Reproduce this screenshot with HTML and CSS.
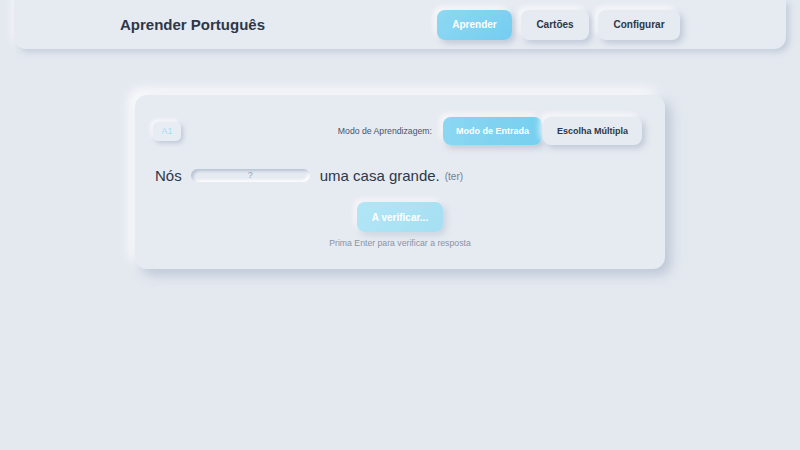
FILE: index.html
```html
<!DOCTYPE html>
<html lang="pt">
<head>
<meta charset="utf-8">
<title>Aprender Português</title>
<link rel="stylesheet" href="styles.css">
</head>
<body>
<header class="header">
  <div class="header-inner">
    <h1 class="title">Aprender Português</h1>
    <nav class="nav">
      <button class="nav-btn active">Aprender</button>
      <button class="nav-btn">Cartões</button>
      <button class="nav-btn">Configurar</button>
    </nav>
  </div>
</header>
<main class="main">
  <section class="card">
    <div class="top-row">
      <span class="badge">A1</span>
      <div class="mode">
        <span class="mode-label">Modo de Aprendizagem:</span>
        <div class="toggle">
          <button class="toggle-btn active">Modo de Entrada</button>
          <button class="toggle-btn">Escolha Múltipla</button>
        </div>
      </div>
    </div>
    <div class="sentence">
      <span class="word">Nós</span>
      <span class="blank">?</span>
      <span class="word">uma casa grande.</span>
      <span class="hint-verb">(ter)</span>
    </div>
    <div class="actions">
      <button class="check-btn">A verificar...</button>
      <p class="help">Prima Enter para verificar a resposta</p>
    </div>
  </section>
</main>
</body>
</html>
```

FILE: styles.css
```css
* { box-sizing: border-box; }
html, body { margin: 0; padding: 0; }
body {
  background: #e4e9f0;
  font-family: "Liberation Sans", Arial, sans-serif;
  color: #2d3748;
  width: 800px;
  height: 450px;
  overflow: hidden;
}
button { font-family: inherit; border: none; cursor: pointer; }

.header {
  margin: 0 14px;
  height: 49px;
  background: #e6eaf1;
  border-radius: 0 0 12px 12px;
  box-shadow: 3px 3px 6px rgba(163, 177, 198, 0.55), -3px -1px 6px rgba(255, 255, 255, 0.7);
}
.header-inner {
  width: 560px;
  margin: 0 auto;
  height: 100%;
  display: flex;
  align-items: center;
  justify-content: space-between;
}
.title {
  margin: 0;
  font-size: 15px;
  font-weight: 700;
  color: #2d3748;
}
.nav { display: flex; gap: 9px; }
.nav-btn {
  height: 30px;
  padding: 0;
  border-radius: 8px;
  font-size: 10px;
  font-weight: 700;
  color: #2d3748;
  background: #e6eaf1;
  box-shadow: 3px 3px 6px rgba(163, 177, 198, 0.6), -3px -3px 6px rgba(255, 255, 255, 0.85);
}
.nav-btn:nth-child(2) { width: 68px; }
.nav-btn:nth-child(3) { width: 82px; }
.nav-btn.active {
  width: 75px;
  color: #ffffff;
  background: linear-gradient(135deg, #8ed8f2, #74cdf0);
}

.main { padding-top: 46px; }
.card {
  width: 530px;
  margin: 0 auto;
  background: #e6eaf1;
  border-radius: 12px;
  padding: 22px 20px 21px 20px;
  box-shadow: 6px 6px 12px rgba(163, 177, 198, 0.6), -6px -6px 12px rgba(255, 255, 255, 0.85);
}
.top-row {
  display: flex;
  align-items: center;
  justify-content: space-between;
  height: 28px;
  margin: 0 3px 0 -2px;
}
.badge {
  width: 28px;
  height: 19px;
  display: flex;
  align-items: center;
  justify-content: center;
  font-size: 9px;
  color: #a6dcef;
  background: #e8ecf3;
  border-radius: 5px;
  box-shadow: 2px 2px 4px rgba(163, 177, 198, 0.6), -2px -2px 4px rgba(255, 255, 255, 0.9);
}
.mode { display: flex; align-items: center; gap: 11px; }
.mode-label { font-size: 8.7px; color: #4a5568; }
.toggle { display: flex; }
.toggle-btn {
  width: 99px;
  height: 28px;
  border-radius: 8px;
  font-size: 9px;
  font-weight: 700;
  color: #2d3748;
  background: #e6eaf1;
  box-shadow: 3px 3px 6px rgba(163, 177, 198, 0.6), -3px -3px 6px rgba(255, 255, 255, 0.85);
}
.toggle-btn + .toggle-btn { margin-left: 1px; }
.toggle-btn.active {
  color: #ffffff;
  background: linear-gradient(90deg, #8ad7f2, #76cfef);
}

.sentence {
  display: flex;
  align-items: center;
  height: 22px;
  margin-top: 19px;
}
.word { font-size: 15px; color: #2d3748; }
.blank {
  width: 119px;
  height: 13px;
  margin: 0 10px 0 9px;
  border-radius: 7px;
  background: #e6eaf1;
  font-size: 9px;
  color: #9aa3b0;
  display: flex;
  align-items: center;
  justify-content: center;
  box-shadow: inset 2px 2px 3px rgba(163, 177, 198, 0.7), inset -2px -2px 3px rgba(255, 255, 255, 0.9);
}
.hint-verb { font-size: 10px; color: #718096; margin-left: 5px; margin-top: 2px; }

.actions {
  display: flex;
  flex-direction: column;
  align-items: center;
  margin-top: 16px;
}
.check-btn {
  width: 86px;
  height: 30px;
  border-radius: 8px;
  font-size: 10px;
  font-weight: 700;
  color: #ffffff;
  background: linear-gradient(135deg, #b2e6f6, #a5dff2);
  box-shadow: 3px 3px 6px rgba(163, 177, 198, 0.4), -3px -3px 6px rgba(255, 255, 255, 0.7);
}
.help {
  margin: 6px 0 0;
  font-size: 8.7px;
  color: #8a94a3;
}
```
